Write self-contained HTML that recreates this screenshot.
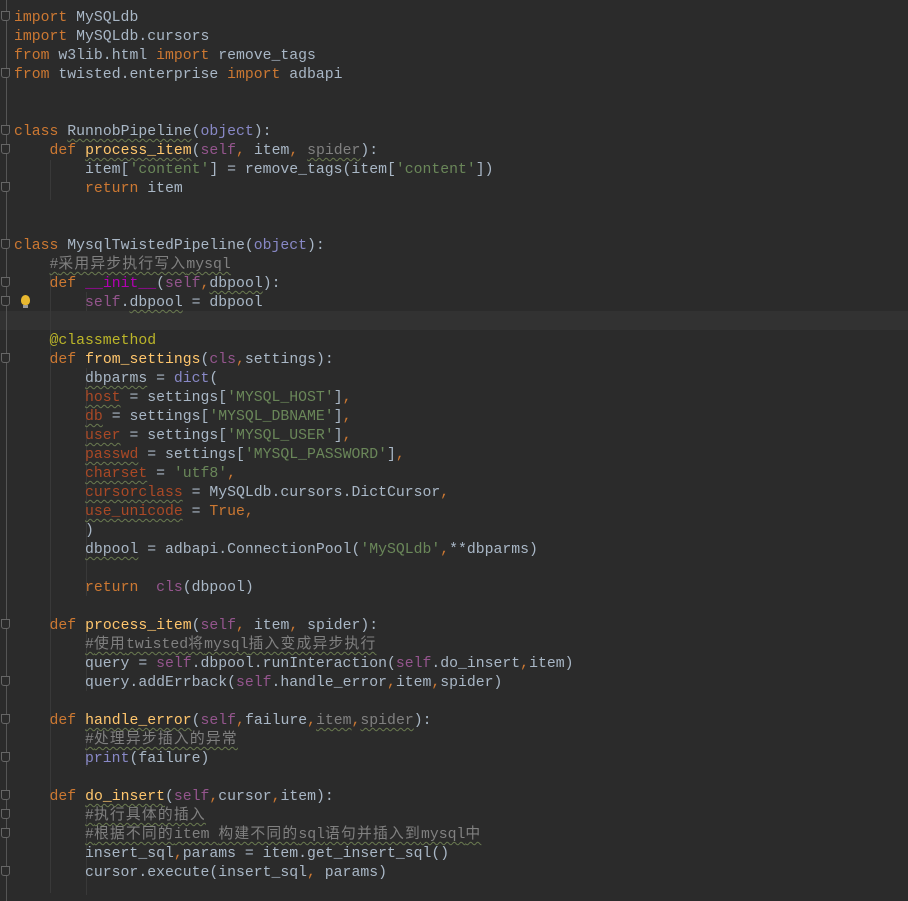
<!DOCTYPE html>
<html><head><meta charset="utf-8"><style>
html,body{margin:0;padding:0;background:#2b2b2b;width:908px;height:901px;overflow:hidden}
.cur{position:absolute;left:0;top:311px;width:908px;height:19px;background:#323232}
.gut{position:absolute;left:6px;top:0;width:1px;height:901px;background:#555}
.ig{position:absolute;width:1px;background:#393939}
pre{position:absolute;left:14px;top:9px;margin:0;font-family:"Liberation Mono","Noto Sans CJK SC",monospace;font-size:14.8px;line-height:19px;color:#a9b7c6}
.k{color:#cc7832}.s{color:#6a8759}.f{color:#ffc66d}.sf{color:#94558d}.c{color:#808080}.d{color:#bbb529}.n{color:#aa4926}.b{color:#8888c6}.m{color:#b200b2}
.w{text-decoration:underline wavy #6a7a50;text-underline-offset:3px;text-decoration-thickness:1px}
.z{letter-spacing:1.2px}
.fold{position:absolute;left:1px;width:9px;height:10px;border:1px solid #666;background:#2b2b2b;box-sizing:border-box;border-radius:0 0 3px 3px}
.bulb{position:absolute;left:21px;top:295px;width:9px;height:10px;border-radius:50% 50% 40% 40%;background:#e8b830}
.bulb:after{content:"";position:absolute;left:2px;top:10px;width:5px;height:3px;background:#999}
</style></head><body>
<div class="cur"></div>
<div class="gut"></div>
<div class="ig" style="left:50px;top:160px;height:40px"></div>
<div class="ig" style="left:50px;top:273px;height:620px"></div>
<div class="ig" style="left:86px;top:292px;height:19px"></div>
<div class="ig" style="left:86px;top:368px;height:228px"></div>
<div class="ig" style="left:86px;top:634px;height:57px"></div>
<div class="ig" style="left:86px;top:729px;height:38px"></div>
<div class="ig" style="left:86px;top:805px;height:90px"></div>
<div class="fold" style="top:11px"></div><div class="fold" style="top:68px"></div>
<div class="fold" style="top:125px"></div><div class="fold" style="top:144px"></div><div class="fold" style="top:182px"></div>
<div class="fold" style="top:239px"></div><div class="fold" style="top:277px"></div><div class="fold" style="top:296px"></div>
<div class="fold" style="top:353px"></div><div class="fold" style="top:619px"></div><div class="fold" style="top:676px"></div>
<div class="fold" style="top:714px"></div><div class="fold" style="top:752px"></div><div class="fold" style="top:790px"></div>
<div class="fold" style="top:809px"></div><div class="fold" style="top:828px"></div><div class="fold" style="top:866px"></div>
<div class="bulb"></div>
<pre><span class="k">import</span> MySQLdb
<span class="k">import</span> MySQLdb.cursors
<span class="k">from</span> w3lib.html <span class="k">import</span> remove_tags
<span class="k">from</span> twisted.enterprise <span class="k">import</span> adbapi


<span class="k">class</span> <span class="w">RunnobPipeline</span>(<span class="b">object</span>):
    <span class="k">def</span> <span class="f w">process_item</span>(<span class="sf">self</span><span class="k">,</span> item<span class="k">,</span> <span class="c w">spider</span>):
        item[<span class="s">'content'</span>] = remove_tags(item[<span class="s">'content'</span>])
        <span class="k">return</span> item


<span class="k">class</span> MysqlTwistedPipeline(<span class="b">object</span>):
    <span class="c w">#<span class="z">采用异步执行写入</span>mysql</span>
    <span class="k">def</span> <span class="m">__init__</span>(<span class="sf">self</span><span class="k">,</span><span class="w">dbpool</span>):
        <span class="sf">self</span>.<span class="w">dbpool</span> = dbpool

    <span class="d">@classmethod</span>
    <span class="k">def</span> <span class="f">from_settings</span>(<span class="sf">cls</span><span class="k">,</span>settings):
        <span class="w">dbparms</span> = <span class="b">dict</span>(
        <span class="n w">host</span> = settings[<span class="s">'MYSQL_HOST'</span>]<span class="k">,</span>
        <span class="n w">db</span> = settings[<span class="s">'MYSQL_DBNAME'</span>]<span class="k">,</span>
        <span class="n w">user</span> = settings[<span class="s">'MYSQL_USER'</span>]<span class="k">,</span>
        <span class="n w">passwd</span> = settings[<span class="s">'MYSQL_PASSWORD'</span>]<span class="k">,</span>
        <span class="n w">charset</span> = <span class="s">'utf8'</span><span class="k">,</span>
        <span class="n w">cursorclass</span> = MySQLdb.cursors.DictCursor<span class="k">,</span>
        <span class="n w">use_unicode</span> = <span class="k">True,</span>
        )
        <span class="w">dbpool</span> = adbapi.ConnectionPool(<span class="s">'MySQLdb'</span><span class="k">,</span>**dbparms)

        <span class="k">return</span>  <span class="sf">cls</span>(dbpool)

    <span class="k">def</span> <span class="f">process_item</span>(<span class="sf">self</span><span class="k">,</span> item<span class="k">,</span> spider):
        <span class="c w">#<span class="z">使用</span>twisted<span class="z">将</span>mysql<span class="z">插入变成异步执行</span></span>
        query = <span class="sf">self</span>.dbpool.runInteraction(<span class="sf">self</span>.do_insert<span class="k">,</span>item)
        query.addErrback(<span class="sf">self</span>.handle_error<span class="k">,</span>item<span class="k">,</span>spider)

    <span class="k">def</span> <span class="f w">handle_error</span>(<span class="sf">self</span><span class="k">,</span>failure<span class="k">,</span><span class="c w">item</span><span class="k">,</span><span class="c w">spider</span>):
        <span class="c w">#<span class="z">处理异步插入的异常</span></span>
        <span class="b">print</span>(failure)

    <span class="k">def</span> <span class="f w">do_insert</span>(<span class="sf">self</span><span class="k">,</span>cursor<span class="k">,</span>item):
        <span class="c w">#<span class="z">执行具体的插入</span></span>
        <span class="c w">#<span class="z">根据不同的</span>item <span class="z">构建不同的</span>sql<span class="z">语句并插入到</span>mysql<span class="z">中</span></span>
        insert_sql<span class="k">,</span>params = item.get_insert_sql()
        cursor.execute(insert_sql<span class="k">,</span> params)</pre>
</body></html>
